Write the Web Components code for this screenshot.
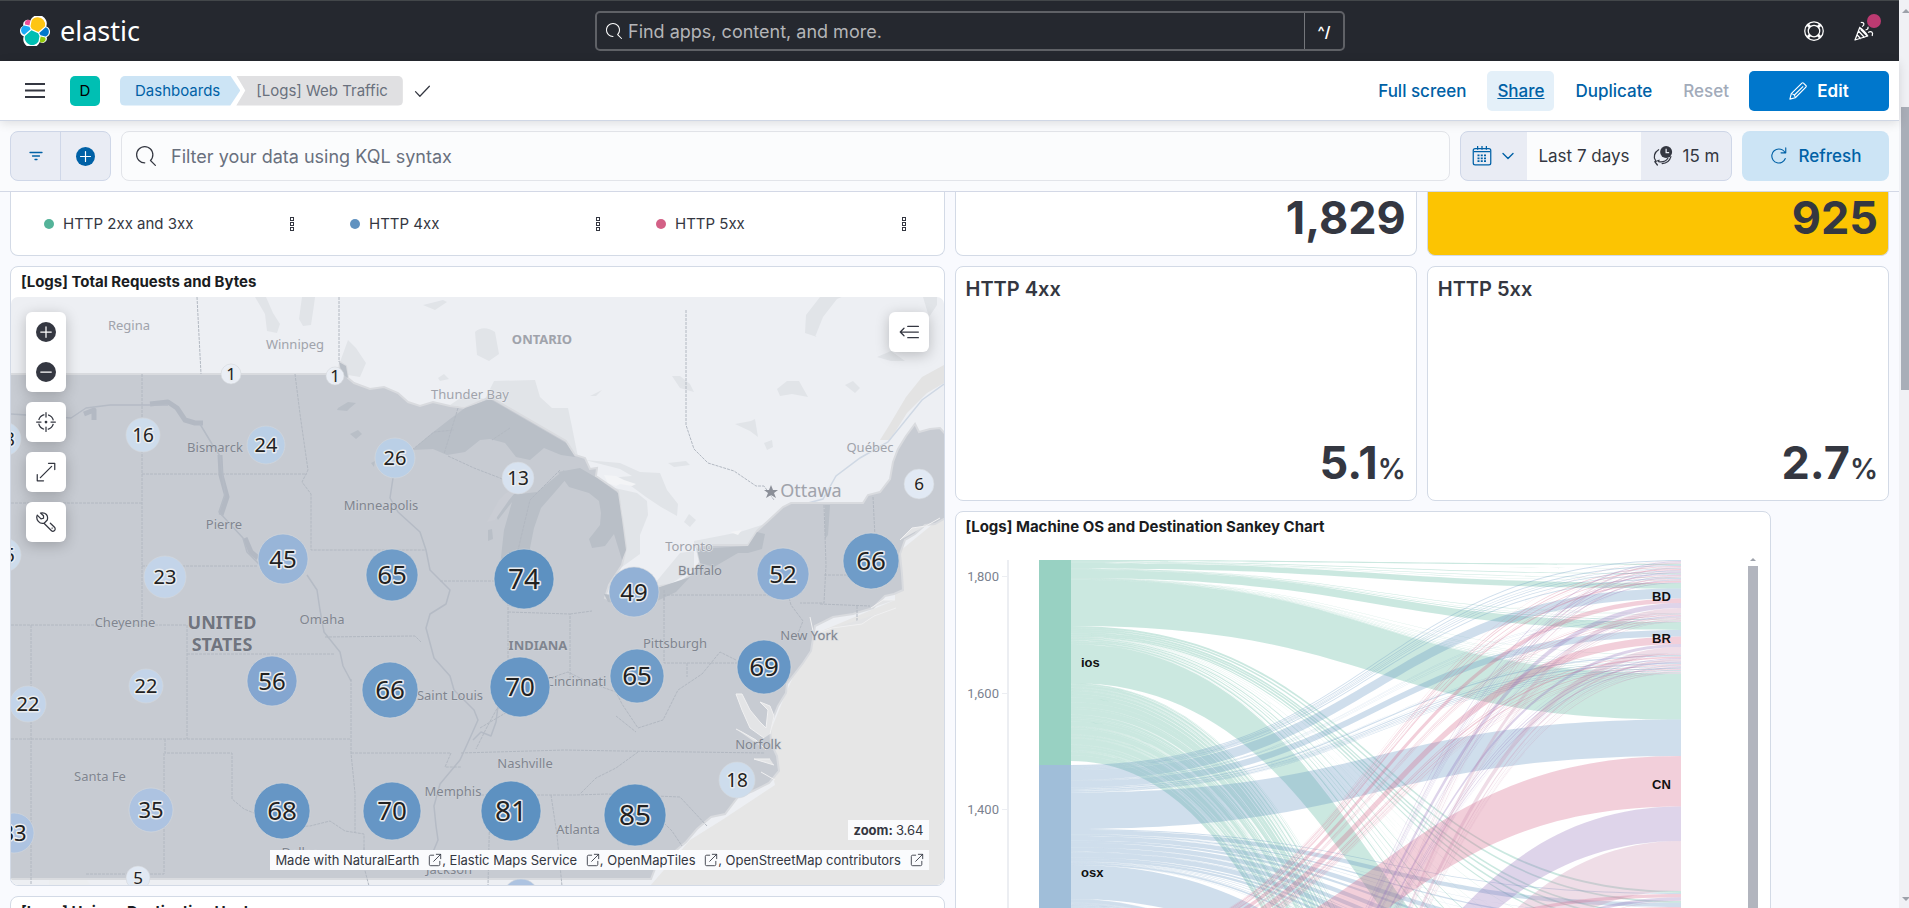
<!DOCTYPE html>
<html lang="en">
<head>
<meta charset="utf-8">
<title>[Logs] Web Traffic - Elastic</title>
<style>
  html, body { margin: 0; height: 100%; }
  body { font-family: Inter, "Liberation Sans", sans-serif; font-size: 15px; color: #343741; background: #f9fafe; overflow: hidden; }
</style>
</head>
<body>
<elastic-app></elastic-app>

<script>
const define = (name, html, setup) => {
  const template = document.createElement('template');
  template.innerHTML = html;
  customElements.define(name, class extends HTMLElement {
    constructor() {
      super();
      this.attachShadow({ mode: 'open' }).append(template.content.cloneNode(true));
    }
    connectedCallback() { if (setup) setup.call(this, this.shadowRoot); }
  });
};

/* ---------- icons ---------- */
const ICONS = {
  search: '<path fill="currentColor" d="M11.271 11.978l3.872 3.873a.502.502 0 00.708 0 .502.502 0 000-.708l-3.565-3.564c2.38-2.747 2.267-6.923-.342-9.532-2.73-2.73-7.17-2.73-9.898 0-2.728 2.729-2.728 7.17 0 9.9a6.955 6.955 0 004.949 2.05.5.5 0 000-1 5.96 5.96 0 01-4.242-1.757 6.01 6.01 0 010-8.486 6.004 6.004 0 018.484 0 6.01 6.01 0 010 8.486.5.5 0 00.034.738z"/>',
  help: '<g fill="none" stroke="currentColor"><circle cx="8" cy="8" r="7.4"/><circle cx="8" cy="8" r="4.6"/><path stroke-width="2.4" d="M3 3l2 2M11 11l2 2M13 3l-2 2M5 11l-2 2"/></g>',
  cheer: '<g fill="none" stroke="currentColor" stroke-linecap="round" stroke-linejoin="round"><path d="M4.6 5.2L.8 15.2 11 12zM4.6 5.2c1.8 1 5.4 4.4 6.4 6.8M3.6 8l4.6 5M2.4 11l2.8 3M5.6 7l5 5"/><path d="M6.8 4.200C8.600 3.200 8.200.9 5.800 1.200M9.600 7c1.200-.2 1.800-1 1.600-2M11.600 9c2-1.200 4 0 3 2.600"/></g>',
  menu: '<path fill="currentColor" d="M0 1.600h16v1.600H0zM0 6.800h16v1.600H0zM0 12h16v1.600H0z"/>',
  check: '<path fill="none" stroke="currentColor" stroke-linecap="round" stroke-linejoin="round" d="M2 8.500L5.500 12.200l7.600-8"/>',
  pencil: '<g fill="none" stroke="currentColor" stroke-linejoin="round"><path d="M11.500 1a1 1 0 011.400 0l2.100 2.100a1 1 0 010 1.400L5.600 14 .8 15.200 2 10.400z"/><path d="M4.400 12L12.600 3.800M2 10.400c1.800.2 3.400 1.800 3.600 3.600"/></g>',
  filter: '<path fill="none" stroke="currentColor" stroke-width="1.300" stroke-linecap="round" d="M2 4.500h12M4.500 8h7M7 11.500h2"/>',
  plusFilled: '<circle cx="8" cy="8" r="8" fill="currentColor"/><path stroke="#fff" stroke-linecap="round" d="M3.800 8h8.400M8 3.800v8.400"/>',
  minusFilled: '<circle cx="8" cy="8" r="8" fill="currentColor"/><path stroke="#fff" stroke-linecap="round" d="M3.800 8h8.400"/>',
  calendar: '<g fill="none" stroke="currentColor"><rect x="1" y="2" width="14" height="13" rx="1.500"/><path d="M1.500 4.500h13M4.500 0v3M8 0v3M11.500 0v3"/><path stroke-width="1.400" stroke-dasharray="1.600 1" d="M4.400 7.500h7M4.400 9.800h7M4.400 12.100h7"/></g>',
  chevron: '<path fill="none" stroke="currentColor" stroke-width="1.400" stroke-linecap="round" stroke-linejoin="round" d="M3 5.500l5 5 5-5"/>',
  timeRefresh: '<circle cx="10.500" cy="4.800" r="4.800" fill="currentColor"/><path stroke="#e9ecf4" fill="none" d="M10.500 2.200v3h2.400"/><path fill="none" stroke="currentColor" stroke-linecap="round" d="M4.500 3C1 5 .2 8.800 2 11.500M3.500 15.200L1.500 12.600l3.400-1.200M4.500 12.500c3 .5 6-.5 7.400-2.700M14.300 8.500c-1 3.500-4 5.500-7 5.500"/>',
  refresh: '<path fill="none" stroke="currentColor" stroke-linecap="round" stroke-linejoin="round" d="M13.600 10.200A6.200 6.200 0 117.800 1.800c2.400 0 4.400 1.200 5.600 3.200M14 .8v4.400H9.800"/>',
  popout: '<g fill="none" stroke="currentColor" stroke-linecap="round" stroke-linejoin="round"><path d="M6.500 2.500H3a1.500 1.500 0 00-1.500 1.500v9A1.500 1.500 0 003 14.500h9a1.500 1.500 0 001.500-1.500V9.500M9.500 1.500h5v5M14.500 1.500L6.500 9.500"/></g>',
  crosshair: '<g fill="none" stroke="currentColor"><circle cx="8" cy="8" r="6" stroke-dasharray="6.400 3.025" stroke-dashoffset="-1.500"/><path stroke-linecap="round" d="M8 .5v3.500M8 12v3.500M.5 8H4M12 8h3.500"/><circle cx="8" cy="8" r=".6" fill="currentColor"/></g>',
  expand: '<path fill="none" stroke="currentColor" stroke-linecap="round" stroke-linejoin="round" d="M10 1h5v5M6 15H1v-5M12.500 3.500l-9 9"/>',
  wrench: '<g fill="none" stroke="currentColor" stroke-linecap="round" stroke-linejoin="round"><path d="M1 2.500L4 5.500 6 5 6 3 3.600.8C8 0 10 3 9 6.400L7.500 8M1 2.500C-.5 6 3 10 6.400 9L8 7.500M6.400 9l5.800 5.800a1.800 1.800 0 002.600-2.600L11.500 9M12.800 12.800h.2"/></g>',
  collapse: '<path fill="none" stroke="currentColor" stroke-linecap="round" stroke-linejoin="round" d="M7 3.500h8.500M1 8h14.500M7 12.500h8.500M4 5L1 8l3 3"/>',
  boxes: '<g fill="none" stroke="currentColor"><rect x="6.500" y="1.500" width="3" height="3"/><rect x="6.500" y="6.500" width="3" height="3"/><rect x="6.500" y="11.500" width="3" height="3"/></g>'
};
define('ui-icon', `
  <style>:host { display: inline-flex; flex: none; width: var(--size, 20px); height: var(--size, 20px); } svg { width: 100%; height: 100%; }</style>
  <svg viewBox="0 0 16 16" aria-hidden="true"></svg>`,
  function (root) { root.querySelector('svg').innerHTML = ICONS[this.getAttribute('name')]; });

/* ---------- top bar ---------- */
define('global-header', `
  <style>
    :host { display: grid; grid-template-columns: 1fr 750px 534px; align-items: center; height: 60px; padding: 0 20px; background: #25282f; border-top: 1px solid #43474a; color: #fff; }
    .brand { display: flex; align-items: center; gap: 10px; color: #fff; text-decoration: none; font: 27px/32px "Noto Sans", sans-serif; }
    .brand svg { width: 30px; height: 30px; }
    form { display: flex; height: 36px; border: 2px solid #5f6166; border-radius: 5px; margin: 0; }
    label { flex: 1; display: flex; align-items: center; gap: 6px; padding-left: 9px; border-right: 1px solid #74767b; --size: 16px; }
    input { flex: 1; min-width: 0; background: none; border: 0; padding: 0; outline: 0; font: 18px Inter, sans-serif; color: #fff; }
    input::placeholder { color: #b4b5b8; opacity: 1; }
    kbd { width: 38px; display: grid; place-items: center; font: 600 15px Inter, sans-serif; }
    nav { display: flex; justify-content: flex-end; gap: 30px; margin-right: 5px; }
    button { position: relative; display: flex; background: none; border: 0; padding: 0; color: #fff; }
    .dot { position: absolute; right: -7px; top: -7px; width: 14px; height: 14px; border-radius: 50%; background: #bc3a71; }
  </style>
  <a class="brand" href="#">
    <svg viewBox="0 0 32 32" aria-hidden="true">
      <path fill="#fff" d="M32 16.800a6 6 0 00-4-5.600A9 9 0 0010.900 5 4.800 4.800 0 003.600 10.300 6.100 6.100 0 000 15.900a6 6 0 004 5.700 9 9 0 0017.100 6.100 4.700 4.700 0 007.300-5.300 6 6 0 003.600-5.600"/>
      <path fill="#fec514" d="M12.600 13.800l7 3.200 7.100-6.200A7.900 7.900 0 0018.900 1.300a7.900 7.900 0 00-6.500 3.500l-1.200 6.100z"/>
      <path fill="#00bfb3" d="M5.300 21.300a7.900 7.900 0 0014.400 6l1.100-6-1.500-3-7.100-3.200z"/>
      <path fill="#f04e98" d="M5.300 9.100l4.800 1.100 1-5.500A3.800 3.800 0 005.300 9.100"/>
      <path fill="#1ba9f5" d="M4.800 10.200a5.300 5.300 0 00-3.600 5 5.300 5.300 0 003.400 4.900l6.700-6.100-1.200-2.600z"/>
      <path fill="#93c90e" d="M21 27.300a3.700 3.700 0 005.800-4.400L22 21.800z"/>
      <path fill="#0077cc" d="M21.900 20.600l5.300 1.300a5.300 5.300 0 003.600-5 5.300 5.300 0 00-3.400-5l-6.900 6.100z"/>
    </svg>
    <span>elastic</span>
  </a>
  <form role="search"><label><ui-icon name="search"></ui-icon><input type="text" aria-label="Find apps, content, and more." placeholder="Find apps, content, and more."></label><kbd>^/</kbd></form>
  <nav><button type="button" aria-label="Help"><ui-icon name="help"></ui-icon></button><button type="button" aria-label="What's new"><ui-icon name="cheer"></ui-icon><span class="dot"></span></button></nav>`);

/* ---------- breadcrumb bar ---------- */
define('page-header', `
  <style>
    :host { display: flex; align-items: center; height: 59px; padding: 0 10px 0 25px; background: #fff; border-bottom: 1px solid #d0d7e5; box-shadow: 0 2px 10px rgba(0,0,0,.12); position: relative; z-index: 2; }
    button { font: inherit; border: 0; padding: 0; background: none; color: inherit; display: flex; align-items: center; }
    .space { margin: 0 20px 0 25px; width: 30px; height: 30px; border-radius: 5px; background: #00bfb3; color: #000; justify-content: center; }
    ol { display: flex; margin: 0 10px 0 0; padding: 0; list-style: none; line-height: 30px; }
    li a, li span { display: block; height: 30px; padding: 0 15px; text-decoration: none; }
    li a { color: #0061a6; background: #cce4f5; padding-right: 20px; border-radius: 5px 0 0 5px; clip-path: polygon(0 0, calc(100% - 10px) 0, 100% 50%, calc(100% - 10px) 100%, 0 100%); }
    li span { margin-left: -4px; padding-left: 20px; color: #69707d; background: #e0e0e2; border-radius: 0 5px 5px 0; clip-path: polygon(0 0, 100% 0, 100% 100%, 0 100%, 9px 50%); }
    nav { margin-left: auto; display: flex; font-size: 17px; font-weight: 500; color: #0061a6; }
    nav button { height: 40px; padding: 0 10px; margin-left: 11px; border-radius: 5px; white-space: nowrap; }
    .share { background: #e4f0f9; text-decoration: underline; }
    .reset { color: #a2abba; }
    nav .edit { margin-left: 10px; width: 140px; background: #0077cc; color: #fff; font-weight: 600; justify-content: center; gap: 10px; }
  </style>
  <button type="button" aria-label="Menu"><ui-icon name="menu"></ui-icon></button>
  <button type="button" class="space">D</button>
  <ol><li><a href="#">Dashboards</a></li><li><span>[Logs] Web Traffic</span></li></ol>
  <ui-icon name="check"></ui-icon>
  <nav>
    <button type="button">Full screen</button><button type="button" class="share">Share</button><button type="button">Duplicate</button>
    <button type="button" class="reset" disabled>Reset</button><button type="button" class="edit"><ui-icon name="pencil" style="--size:18px"></ui-icon>Edit</button>
  </nav>`);

/* ---------- query bar ---------- */
define('query-bar', `
  <style>
    :host { display: flex; gap: 10px; padding: 10px; background: #fafbfd; border-bottom: 1px solid #d3d8e6; font-size: 18px; }
    * { box-sizing: border-box; }
    button { font: inherit; border: 0; padding: 0; margin: 0; background: none; color: inherit; display: flex; align-items: center; justify-content: center; }
    .group { display: flex; height: 50px; border: 1px solid #cfd7e8; border-radius: 8px; background: #e9ecf4; overflow: hidden; }
    .filters button { width: 49px; color: #0061a6; }
    .filters button + button { border-left: 1px solid #cfd7e8; width: 50px; }
    label { flex: 1; height: 50px; display: flex; align-items: center; gap: 15px; padding: 0 14px; border: 1px solid #e2e4e9; border-radius: 8px; background: #fbfcfd; }
    input { flex: 1; min-width: 0; border: 0; outline: 0; padding: 0; background: none; font: 18px Inter, sans-serif; color: #343741; }
    input::placeholder { color: #69707d; opacity: 1; }
    .quick { width: 66px; color: #0061a6; gap: 8px; }
    .range { background: #fbfcfd; width: 114px; font-size: 17px; white-space: nowrap; }
    .every { width: 90px; gap: 10px; font-size: 17px; white-space: nowrap; }
    .refresh { width: 147px; height: 50px; border-radius: 8px; background: #cce4f5; color: #0061a6; gap: 11px; font-size: 17px; font-weight: 500; }
  </style>
  <div class="group filters"><button type="button" aria-label="Saved filters"><ui-icon name="filter" style="--size:16px"></ui-icon></button><button type="button" aria-label="Add filter"><ui-icon name="plusFilled" style="--size:19px"></ui-icon></button></div>
  <label><ui-icon name="search"></ui-icon><input type="text" aria-label="Query" placeholder="Filter your data using KQL syntax"></label>
  <div class="group"><button type="button" class="quick" aria-label="Date quick select"><ui-icon name="calendar"></ui-icon><ui-icon name="chevron" style="--size:16px"></ui-icon></button><button type="button" class="range">Last 7 days</button><button type="button" class="every"><ui-icon name="timeRefresh"></ui-icon>15 m</button></div>
  <button type="button" class="refresh"><ui-icon name="refresh" style="--size:18px"></ui-icon>Refresh</button>`);

/* ---------- panels ---------- */
define('dash-panel', `
  <style>
    :host { display: flex; flex-direction: column; box-sizing: border-box; min-width: 0; background: #fff; border: 1px solid #d3dae6; border-radius: 8px; overflow: hidden; }
    :host([cut]) { border-top: 0; border-radius: 0 0 8px 8px; }
    :host([warn]) { background: #fcc402; }
    h2 { margin: 0; padding: 0 10px; font-size: 15px; font-weight: 700; line-height: 30px; color: #1a1c21; white-space: nowrap; }
    h2:empty { display: none; }
    .body { flex: 1; min-height: 0; display: grid; grid-template-rows: minmax(0, 1fr); }
  </style>
  <h2></h2><div class="body"><slot></slot></div>`,
  function (root) { root.querySelector('h2').textContent = this.getAttribute('heading') || ''; });

define('metric-value', `
  <style>
    :host { display: flex; flex-direction: column; justify-content: flex-end; padding: 10px; min-height: 0; }
    .title { font-size: 20px; font-weight: 600; line-height: 24px; margin-bottom: auto; }
    .title:empty { display: none; }
    .value { text-align: right; font-size: 45px; font-weight: 700; line-height: 54px; }
    small { font-size: 28px; font-weight: 600; line-height: 0; }
  </style>
  <div class="title"></div><div class="value"><span></span><small></small></div>`,
  function (root) {
    root.querySelector('.title').textContent = this.getAttribute('title-text') || '';
    root.querySelector('span').textContent = this.getAttribute('value');
    root.querySelector('small').textContent = this.getAttribute('unit') || '';
  });

define('legend-row', `
  <style>
    :host { display: grid; grid-template-columns: repeat(3, 306px); padding: 20px 0 0 33px; align-content: start; }
    .item { display: flex; align-items: center; gap: 9px; line-height: 24px; color: #343741; }
    i { width: 10px; height: 10px; border-radius: 50%; }
    button { border: 0; padding: 0; background: none; color: inherit; margin-left: auto; margin-right: 50px; display: flex; }
  </style>
  <div class="item"><i style="background:#54b399"></i><span>HTTP 2xx and 3xx</span><button type="button" aria-label="Options"><ui-icon name="boxes" style="--size:16px"></ui-icon></button></div>
  <div class="item"><i style="background:#6092c0"></i><span>HTTP 4xx</span><button type="button" aria-label="Options"><ui-icon name="boxes" style="--size:16px"></ui-icon></button></div>
  <div class="item"><i style="background:#d36086"></i><span>HTTP 5xx</span><button type="button" aria-label="Options"><ui-icon name="boxes" style="--size:16px"></ui-icon></button></div>`);

/* ---------- map ---------- */
const CITIES = [
  [129,330,'Regina'],[295,349,'Winnipeg'],[470,399,'Thunder Bay'],[215,452,'Bismarck',1],[381,510,'Minneapolis',1],[224,529,'Pierre',1],
  [870,452,'Québec'],[689,551,'Toronto'],[700,575,'Buffalo',1],[125,627,'Cheyenne',1],[322,624,'Omaha',1],[675,648,'Pittsburgh',1],
  [576,686,'Cincinnati',1],[450,700,'Saint Louis',1],[809,640,'New York',1],[100,781,'Santa Fe',1],[525,768,'Nashville',1],
  [453,796,'Memphis',1],[758,749,'Norfolk',1],[578,834,'Atlanta',1],[300,857,'Dallas',1],[449,874,'Jackson',1]
];
const CLUSTERS = [
  [4,439,17,18],[4,555,17,15],[231,374,10,1],[335,376,9,1],[143,435,17,16],[266,445,19,24],[395,458,20,26],[518,478,16,13],[919,484,15,6],
  [165,577,21,23],[283,559,25,45],[392,575,26,65],[524,579,30,74],[634,592,25,49],[783,574,26,52],[871,561,28,66],
  [28,704,18,22],[146,686,17,22],[272,681,25,56],[390,690,28,66],[520,687,30,70],[637,676,27,65],[764,667,27,69],[737,780,18,18],
  [14,833,20,33],[151,810,22,35],[282,811,28,68],[392,811,29,70],[511,811,30,81],[635,815,31,85],[138,878,12,5],[521,897,18,30]
];
const clusterColor = n => n < 3 ? '#eaeef5' : n < 10 ? '#e1e9f4' : n < 15 ? '#d7e2f0' : n < 20 ? '#cddcec' : n < 24 ? '#c3d4e9' : n < 30 ? '#bacfe6' :
  n < 40 ? '#adc3e1' : n < 47 ? '#98b5d8' : n < 50 ? '#92b1d6' : n < 54 ? '#8cadd4' : n < 60 ? '#84a6d0' : n < 68 ? '#6f9cc8' : n < 72 ? '#6696c5' : '#5d91c1';
const clusterFont = n => n < 10 ? 17 : n < 20 ? 19 : n < 30 ? 20 : n < 40 ? 22 : n < 60 ? 24 : n < 72 ? 26 : 28;

define('region-map', `
  <style>
    :host { display: block; position: relative; min-height: 0; border-radius: 7px; overflow: hidden; background: #edeff3; }
    svg.base { position: absolute; inset: 0; width: 100%; height: 100%; font-family: "Noto Sans", sans-serif; }
    .city { font-size: 13px; fill: #a0a3ab; stroke: #edeff3; stroke-width: 1px; paint-order: stroke; text-anchor: middle; }
    .city.big { font-size: 18px; }
    .city.bold { font-weight: 700; }
    .us { fill: #80858f; stroke: #ced2d8; }
    .us.big { fill: #70747e; }
    .count { fill: #222; stroke: #e9ecef; stroke-width: 3px; stroke-linejoin: round; paint-order: stroke; text-anchor: middle; }
    .lake { fill: #e1e4e8; } .dark { fill: #b9bfc7; } .state { fill: none; stroke: #b2b8c1; stroke-width: 1; stroke-dasharray: 3 1; } .river { fill: none; stroke: #b5bbc5; stroke-width: 1.500; stroke-linejoin: round; }
    .overlay { position: absolute; inset: 0; padding: 15px; display: grid; grid-template-columns: auto 1fr auto; align-content: space-between; }
    .tools { display: grid; gap: 10px; }
    .box { background: #fff; border-radius: 6px; box-shadow: 0 3px 14px rgba(0,0,0,.22); }
    button { display: grid; place-items: center; width: 40px; height: 40px; padding: 0; border: 0; background: none; color: #343741; }
    .right { grid-column: 3; justify-self: end; align-self: start; }
    .foot { grid-column: 1 / 4; display: flex; flex-direction: column; align-items: flex-end; gap: 10px; font-size: 13px; line-height: 20px; }
    .foot div { background: #fafbfd; padding: 0 5px; display: flex; align-items: center; white-space: pre; }
    a { color: inherit; text-decoration: none; display: inline-flex; align-items: center; gap: 5px; }
    a ui-icon { --size: 14px; }
  </style>
  <svg class="base" role="img" aria-label="Requests by location"><g transform="translate(-11,-297)">
    <path fill="#e6e6e6" d="M650 886L690 840 722 820 775 785 765 745 785 695 812 635 895 600 895 555 944 515V886z"/>
    <path class="lake" d="M255 297l10 17 2 17 10 2 3-9-7-11-7-16zM302 297l-3 22 4 7 8-1 3-20 1-8zM475 332c6-6 14-4 20 0l4 22-10 7-12-6zM340 362l8-22 8 8 10 15-6 14-12-2zM423 305l20-5 4 2-12 8zM438 378l6-4 5 5-9 2zM672 376l8 0 10 8 4 8-14-4zM777 389l10-8 12 0 9 16-16-3-12 2zM845 385l8-4 7 7-5 5zM735 424l16-3 4-2 3 18-8-6zM764 443l8-3 1 7-6 3zM668 463l18-2 4 4-16 2zM590 396l12-6-6 6zM684 522l5-8 7 6-6 7zM877 357l14-6 14 10-14 0zM820 297l-14 18-1 18 12 4-2 0 8-20 14-18 12-5zM923 297l6 20 8-12 0-8z"/>
    <path fill="#e3e3e3" d="M944 365l-22 12-16 20-16 27-10 16 10 0 17-27 20-20 17-10z"/>
    <path fill="none" stroke="#cfd8e4" stroke-width="1.500" d="M944 384l-22 16-34 42-28 16-24 18-13 23-30 8-22 18"/>
    <path class="lake" d="M450 405l15-10 20 4 9-18 41-1 5 17 12 11 16 0 4 19 6 30 -12 -14 -76 -44 -25 8zM585 460l35 3 20 9 20 1 7 17 11 14-1 12-16-9-15-10-19-14-20-5 13-1 12-1-12-7zM597 478l13 9 27 6 10 8 1 14-8 20 0 19-18 13 4-17-4-40-4-17zM694 541l46-9 28-9-11 9-9 14-54 2zM680 553l14-2 0 18-22 14-14 4-2-5z"/>
    <path fill="#c7cbd2" stroke="#d9dbdf" stroke-width="2" d="M5 374H339l1-12 6 4 2 12 6 5 16 6 14-2 14 6 10 9 12 4 13-4 17 4 15 2 25-11 76 44 9 14 10 3 5 11 7-1-1 8 22 15 4 27 4 30-4 17-13 20-4 13 7 3 22-8 27-7 18-3 14-10 7-11-3-13 5-4H748l9-14 11-10 15-14 8-4h72l5-8 12-3 10-13 3-17 5-13 8-13 9-12 4 8 11-3 10-1 9 10V516l-14 8-10 1-10 9-10 6-5 14 2 20 1 16-9 4-9 2-12 12-20 6-20 3-18 9-4 25-8 12-10 13-6 8-1 9-8 13-8 20 1 17 6 13 2 15-10 12-16 8-15 6-13 17-14 3-14 12-11 13-13 11-15 8-7 18H5z"/>
    <path class="dark" d="M412 450l20-17 18-14 15-11 25-9 76 44 9 14-14-2-17-7-14 12-14-3-11-14-15-4-10 1-15 12-18 3-14-6zM558 472l22-4 17 10 21 15 4 27 4 30-4 10-8-26-9 12-13 2-3-9 11-14 1-12-2-12-10-8-20-6zM537 492l27-22 3 8-12 14-14 16-7 20-8 40-22 14-4-16 4-36 8-28-14 18-3-6 8-16 9-6 8 2zM608 602l-4-8 20 2 36-9 30-10-14 15-38 18-18-6zM697 549l51-3 9-14 8 2-3 15-14 4-10 0-24 14-14-4zM338 408l10-6 8 1-6 5-3 3-10-1zM350 434l8-4 4 4-6 5zM339 362l7 4 2 12-6-4zM825 505l5 0-2 30 -3 4zM371 463l4-2-1 6zM488 530l4-1 1 10-5 2z"/>
    <path fill="#cacdd4" d="M499 500c8-8 13-12 20-12l-10 12-14 20-8 2z"/>
    <path fill="none" stroke="#b3b9c3" stroke-width="5" stroke-linejoin="round" d="M150 404l18-2 9 6 8 12 10 3 8 0M220 455l1 20 6 22-6 18M245 538l6 14 7 6M84 414l10-4 0 10"/>
    <path class="river" d="M11 414l60 4 15-10 24-3 40 0 18 0M200 424l12 20 8 12 5 38-6 18 24 26 4 14 12 12M307 575l10 15 3 20 4 22 16 20 3 14 8 15M393 478l-3 20 8 14 22 20 6 18 4 20 20 20-4 14-16 10-4 14 8 30 16 18 4 14 20 20 4 10-8 18-10 22-20 24-6 22 2 20 2 14-5 12M473 740l8-8 10 4 5-14 2-16"/>
    <path class="state" d="M142 374V625M142 474H307M11 503H142M142 566H258M295 374l5 40 8 56-6 12 9 12V550H426M440 581H510M11 625H187V739M187 654H335M11 739H351M31 625V886M325 637l90-1 6 6M351 679V753l4 40V832M351 753H451l-6 14 16 0M165 739v14h67v46l12 10 10 4 30 14 26-1 20-5 15 10 19 3v17H428M164 753V874H85M364 847v20l5 19M461 753L565 750 620 751 765 753M461 795H575L607 794 680 797 707 826M508 603v80l-8 20 -14 26 -10 20M508 612l62 2V680M664 590V663H740M664 600V595H780M570 614l22-3M480 728l34-20 30-28 24-8 20 10 28 10 6 12 16 24 25-8 15-30 24-16 18-22 16 8M616 716l20 16M638 752l-22 16-20 10-16 16M551 795l6 40 5 51M636 795l36 36 10 15M490 800l-2 86M687 663v14M824 505l2 60-2 38 -24 0M873 497l2 40-20 40M824 575h40M820 604l50 2M857 606v18M197 297l4 77M339 297V362M686 310V425l8 24 14 14 26 8 22 15 8 0 10 14M783 575l8 30 12 16-8 20M510 428l-18 12M458 408l-14 46M412 450l22 -18 20 -2M448 456l26 12 26 10 16 8M560 470l-30 30-12 50"/>
    <path fill="#e3e4e6" stroke="#f0f0f1" d="M766 750l-10-10-14-8-6-3M764 738l-14-10-8-18-6-16 6 0 8 16 10 12 6 6 2-18-8-8 10 4 4 10-4 18M812 635l20-7 30-4 12-8 22-8M810 617l3 14M895 600l-12 0-12 8M900 540l12-12 14-2 14-8M774 765l-20-6 16 0M775 780l-14-8"/>
    <path fill="#f3f4f6" d="M604 475l12 1 8 4 12 4-4 2-12-2-4 2-8-3zM730 532l12-2-4 5z"/>
    <path fill="#eceef0" d="M49 880h38l4 6H49z"/>
    <path fill="#8b8f98" d="M771 485l2 5 5 0-4 3 2 5-5-3-5 3 2-5-4-3 5 0z"/>
    <g id="labels"></g><g id="clusters"></g>
  </g></svg>
  <div class="overlay">
    <div class="tools">
      <div class="box"><button type="button" aria-label="Zoom in"><ui-icon name="plusFilled"></ui-icon></button><button type="button" aria-label="Zoom out"><ui-icon name="minusFilled"></ui-icon></button></div>
      <button type="button" class="box" aria-label="Fit to data"><ui-icon name="crosshair"></ui-icon></button>
      <button type="button" class="box" aria-label="Expand"><ui-icon name="expand"></ui-icon></button>
      <button type="button" class="box" aria-label="Tools"><ui-icon name="wrench"></ui-icon></button>
    </div>
    <button type="button" class="box right" aria-label="Expand layers panel"><ui-icon name="collapse"></ui-icon></button>
    <div class="foot">
      <div><b>zoom: </b>3.64</div>
      <div><a href="#">Made with NaturalEarth <ui-icon name="popout"></ui-icon></a>, <a href="#">Elastic Maps Service <ui-icon name="popout"></ui-icon></a>, <a href="#">OpenMapTiles <ui-icon name="popout"></ui-icon></a>, <a href="#">OpenStreetMap contributors <ui-icon name="popout"></ui-icon></a></div>
    </div>
  </div>`,
  function (root) {
    root.querySelector('#labels').innerHTML = CITIES.map(([x, y, name, us]) => `<text class="city${us ? ' us' : ''}" x="${x}" y="${y}">${name}</text>`).join('') +
      '<text class="city big" x="811" y="497">Ottawa</text>' +
      '<text class="city bold" x="542" y="344">ONTARIO</text>' +
      '<text class="city us bold" x="538" y="650">INDIANA</text>' +
      '<text class="city us big bold" x="222" y="629">UNITED</text>' +
      '<text class="city us big bold" x="222" y="651">STATES</text>';
    root.querySelector('#clusters').innerHTML = CLUSTERS.map(([x, y, r, n]) => {
      const f = clusterFont(n);
      return `<circle cx="${x}" cy="${y}" r="${r}" fill="${clusterColor(n)}" stroke="#d5d8dc" stroke-opacity=".6"/><text class="count" font-size="${f}" x="${x}" y="${y + Math.round(f * 0.36)}">${n}</text>`;
    }).join('');
  });

/* ---------- sankey ---------- */
define('sankey-chart', `
  <style>
    :host { display: flex; min-height: 0; padding: 12px 12px 0 10px; }
    svg { flex: 1; min-width: 0; height: 100%; overflow: hidden; font-family: "Liberation Sans", sans-serif; }
    .axis { font: 13px Roboto, sans-serif; fill: #7b828f; text-anchor: end; }
    .name { font-size: 13px; font-weight: 700; fill: #111; }
    .bar { width: 10px; margin-top: 4px; display: flex; flex-direction: column; align-items: center; gap: 5px; }
    .bar::before { content: ""; border: 3px solid transparent; border-top: 0; border-bottom-color: #9fa3ac; }
    .bar::after { content: ""; flex: 1; width: 10px; background: #b2b5be; }
  </style>
  <svg role="img" aria-label="Machine OS and destination flows"></svg><div class="bar"></div>`,
  function (root) {
    const colors = ['#54b399', '#6092c0', '#d36086', '#9170b8', '#ca8eae'];
    let seed = 7;
    const rnd = () => (seed = (seed * 16807) % 2147483647) / 2147483647;
    /* spread each OS total over a number of small destinations */
    const spread = (totals, count, power) => {
      const rows = Array.from({ length: count }, () => []);
      totals.forEach((total, os) => {
        const raw = rows.map(() => Math.pow(rnd(), power) + 0.04);
        const sum = raw.reduce((a, b) => a + b);
        raw.forEach((v, i) => { rows[i][os] = v / sum * total; });
      });
      return rows;
    };
    const destinations = [
      ...spread([3, 5, 5, 5, 5], 7, 2), [5.5, 10, 4.5, 5, 5],
      ...spread([1.5, 1, 2, 2, 2.5], 4, 1), [8, 6.5, 7.5, 3, 6.5],
      ...spread([2, 5, 5, 4, 4], 8, 2), [46, 36.5, 50.5, 34.5, 50],
      ...spread([18, 36, 50, 35, 50], 19, 2), [39, 34, 50, 30, 50],
      ...spread([78, 52, 77, 25, 88], 44, 3)
    ];
    /* node origins on the left and the stacked origin on the right */
    const left = [0, 205, 393, 650, 798], tops = [...left, 1065];
    const x0 = 105, x1 = 715, xm = 410;
    const cursor = [...left];
    let right = 0;
    const links = [[], [], [], [], []];
    destinations.forEach(row => row.forEach((w, os) => {
      const a = cursor[os], b = right;
      links[os].push(`<path fill="${colors[os]}" fill-opacity=".3" d="M${x0} ${a.toFixed(2)}C${xm} ${a.toFixed(2)} ${xm} ${b.toFixed(2)} ${x1} ${b.toFixed(2)}V${(b + w).toFixed(2)}C${xm} ${(b + w).toFixed(2)} ${xm} ${(a + w).toFixed(2)} ${x0} ${(a + w).toFixed(2)}z"/>`);
      cursor[os] += w; right += w;
    }));
    const nodes = colors.map((c, i) => `<rect x="73" y="${tops[i]}" width="32" height="${tops[i + 1] - tops[i]}" fill="${c}" fill-opacity=".6"/>`);
    const axis = [['1,800', 16], ['1,600', 133], ['1,400', 249]].map(([t, y]) => `<text class="axis" x="33" y="${y + 5}">${t}</text><path stroke="#eceef2" d="M36 ${y + .5}h5"/>`);
    const names = [['ios', 115, 107], ['osx', 115, 317], ['BD', 686, 41], ['BR', 686, 83], ['CN', 686, 229]].map(([t, x, y]) => `<text class="name" x="${x}" y="${y}">${t}</text>`);
    root.querySelector('svg').innerHTML = '<g transform="translate(0,6)"><path stroke="#eceef2" stroke-width="2" d="M42 0V900"/>' + axis.join('') + nodes.join('') + links.flat().join('') + names.join('') + '</g>';
  });

/* ---------- page ---------- */
define('page-scrollbar', `
  <style>
    :host { display: flex; flex-direction: column; background: #f0f1f5; }
    i { width: 0; height: 0; border: 4px solid transparent; margin: 9px 0 0 3px; border-top: 0; border-bottom-color: #9da1aa; }
    b { height: 283px; margin: 94px 0 auto 2px; background: #a9aeb8; }
    i.down { margin: 0 0 7px 3px; border-top: 4px solid #9da1aa; border-bottom: 0; }
  </style><i></i><b></b><i class="down"></i>`);

define('elastic-app', `
  <style>
    :host { display: grid; grid-template-columns: minmax(0, 1fr) 10px; height: 100vh; overflow: hidden; }
    .app { display: flex; flex-direction: column; min-height: 0; }
    main { flex: 1; min-height: 0; display: grid; grid-template-columns: 1fr 1fr; gap: 10px; padding: 0 10px; overflow: hidden; background: #f9fafe; }
    .left { display: grid; gap: 10px; grid-template-rows: 64px 620px 300px; min-width: 0; }
    .right { display: grid; gap: 10px; grid-template-rows: 64px 235px 900px; grid-template-columns: repeat(24, minmax(0, 1fr)); min-width: 0; }
    .half { grid-column: span 12; }
    .wide { grid-column: span 21; }
  </style>
  <div class="app">
    <global-header></global-header>
    <page-header></page-header>
    <query-bar></query-bar>
    <main>
      <div class="left">
        <dash-panel cut><legend-row></legend-row></dash-panel>
        <dash-panel heading="[Logs] Total Requests and Bytes"><region-map></region-map></dash-panel>
        <dash-panel heading="[Logs] Unique Destination Heatmap"></dash-panel>
      </div>
      <div class="right">
        <dash-panel cut class="half"><metric-value value="1,829"></metric-value></dash-panel>
        <dash-panel cut warn class="half"><metric-value value="925"></metric-value></dash-panel>
        <dash-panel class="half"><metric-value title-text="HTTP 4xx" value="5.1" unit="%"></metric-value></dash-panel>
        <dash-panel class="half"><metric-value title-text="HTTP 5xx" value="2.7" unit="%"></metric-value></dash-panel>
        <dash-panel class="wide" heading="[Logs] Machine OS and Destination Sankey Chart"><sankey-chart></sankey-chart></dash-panel>
      </div>
    </main>
  </div>
  <page-scrollbar></page-scrollbar>`);
</script>
</body>
</html>
